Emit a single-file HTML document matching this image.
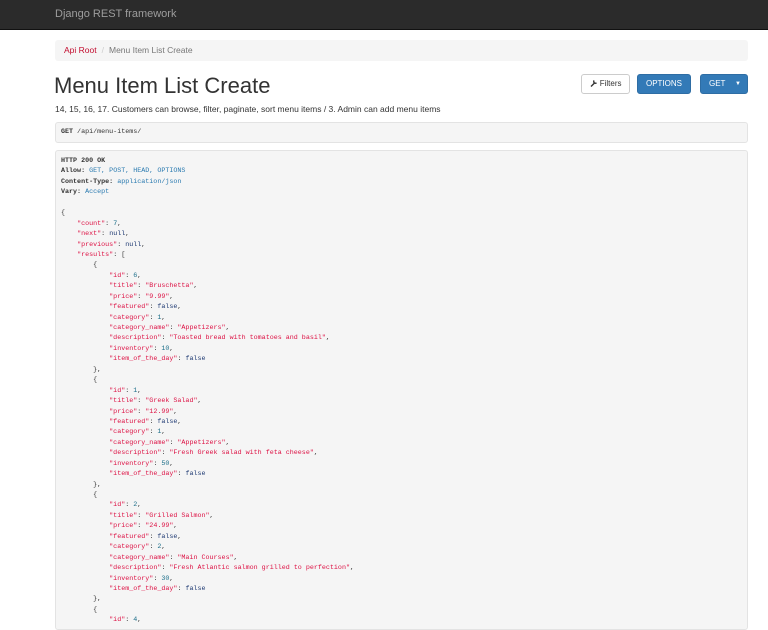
<!DOCTYPE html>
<html><head><meta charset="utf-8"><style>
*{box-sizing:border-box;margin:0;padding:0}
body{width:768px;height:625px;overflow:hidden;background:#fff;font-family:"Liberation Sans",sans-serif;color:#333;position:relative}
.nav{position:absolute;left:0;top:0;width:768px;height:30px;background:#2b2b2b;border-bottom:1px solid #111}
.nav span{position:absolute;left:55px;top:8px;font-size:11px;color:#9d9d9d}
.bc{position:absolute;left:55px;top:40px;width:693px;height:21px;background:#f5f5f5;border-radius:3px;font-size:8.5px;padding:5px 9px;color:#777}
.bc a{color:#c20c2e;text-decoration:none}
.bc i{font-style:normal;color:#ccc;margin:0 5px}
h1{position:absolute;left:54px;top:73px;font-size:22px;font-weight:normal;color:#333}
.desc{position:absolute;left:55px;top:104px;font-size:8.5px;color:#333}
.btn{position:absolute;top:74px;height:20px;border-radius:3px;font-size:8px;line-height:18px;text-align:center}
.req,.resp{position:absolute;left:55px;width:693px;background:#f5f5f5;border:1px solid #e3e3e3;border-radius:3px;font-family:"Liberation Mono",monospace;font-size:6.7px;color:#333}
.req{top:122px;height:21px;padding:5px 5px}
.resp{top:150px;height:480px;padding:5px 5px;line-height:10.44px;white-space:pre}
b{font-weight:bold}
.s{color:#d14}.k{color:#d14}.n{color:#1d6f8a}.l{color:#1f3a73}.h{color:#2a7ab0}
</style></head><body>
<div class="nav"><span>Django REST framework</span></div>
<div class="bc"><a>Api Root</a><i>/</i>Menu Item List Create</div>
<h1>Menu Item List Create</h1>
<div class="desc">14, 15, 16, 17. Customers can browse, filter, paginate, sort menu items / 3. Admin can add menu items</div>
<div class="btn" style="left:581px;width:49px;border:1px solid #ccc;background:#fff;color:#333"><svg width="8" height="8" viewBox="0 0 8 8" style="vertical-align:-1px"><path d="M1 7.5L5 3.5M4.2 1.5a1.6 1.6 0 0 0 2.3 2.3" stroke="#333" stroke-width="1.4" fill="none"/></svg> Filters</div>
<div class="btn" style="left:637px;width:54px;background:#337ab7;border:1px solid #2e6da4;color:#fff">OPTIONS</div>
<div class="btn" style="left:700px;width:48px;background:#337ab7;border:1px solid #2e6da4;color:#fff;text-align:left;padding-left:8px">GET<span style="position:absolute;right:6px;font-size:6px">▼</span></div>
<div class="req"><b>GET</b> /api/menu-items/</div>
<div class="resp"><b>HTTP 200 OK</b>
<b>Allow:</b> <span class="h">GET, POST, HEAD, OPTIONS</span>
<b>Content-Type:</b> <span class="h">application/json</span>
<b>Vary:</b> <span class="h">Accept</span>

{
    <span class="k">"count"</span>: <span class="n">7</span>,
    <span class="k">"next"</span>: <span class="l">null</span>,
    <span class="k">"previous"</span>: <span class="l">null</span>,
    <span class="k">"results"</span>: [
        {
            <span class="k">"id"</span>: <span class="n">6</span>,
            <span class="k">"title"</span>: <span class="s">"Bruschetta"</span>,
            <span class="k">"price"</span>: <span class="s">"9.99"</span>,
            <span class="k">"featured"</span>: <span class="l">false</span>,
            <span class="k">"category"</span>: <span class="n">1</span>,
            <span class="k">"category_name"</span>: <span class="s">"Appetizers"</span>,
            <span class="k">"description"</span>: <span class="s">"Toasted bread with tomatoes and basil"</span>,
            <span class="k">"inventory"</span>: <span class="n">10</span>,
            <span class="k">"item_of_the_day"</span>: <span class="l">false</span>
        },
        {
            <span class="k">"id"</span>: <span class="n">1</span>,
            <span class="k">"title"</span>: <span class="s">"Greek Salad"</span>,
            <span class="k">"price"</span>: <span class="s">"12.99"</span>,
            <span class="k">"featured"</span>: <span class="l">false</span>,
            <span class="k">"category"</span>: <span class="n">1</span>,
            <span class="k">"category_name"</span>: <span class="s">"Appetizers"</span>,
            <span class="k">"description"</span>: <span class="s">"Fresh Greek salad with feta cheese"</span>,
            <span class="k">"inventory"</span>: <span class="n">50</span>,
            <span class="k">"item_of_the_day"</span>: <span class="l">false</span>
        },
        {
            <span class="k">"id"</span>: <span class="n">2</span>,
            <span class="k">"title"</span>: <span class="s">"Grilled Salmon"</span>,
            <span class="k">"price"</span>: <span class="s">"24.99"</span>,
            <span class="k">"featured"</span>: <span class="l">false</span>,
            <span class="k">"category"</span>: <span class="n">2</span>,
            <span class="k">"category_name"</span>: <span class="s">"Main Courses"</span>,
            <span class="k">"description"</span>: <span class="s">"Fresh Atlantic salmon grilled to perfection"</span>,
            <span class="k">"inventory"</span>: <span class="n">30</span>,
            <span class="k">"item_of_the_day"</span>: <span class="l">false</span>
        },
        {
            <span class="k">"id"</span>: <span class="n">4</span>,
</div>
</body></html>
